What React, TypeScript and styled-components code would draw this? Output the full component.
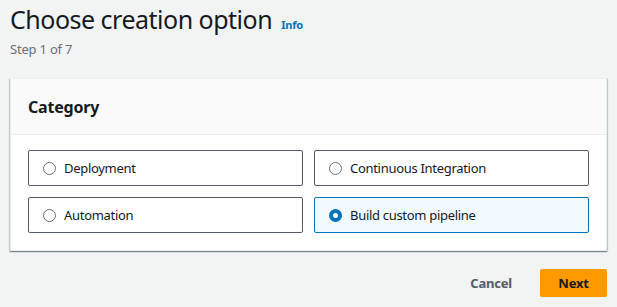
import React from "react";
import styled, { createGlobalStyle } from "styled-components";

const Global = createGlobalStyle`
  html, body { margin: 0; padding: 0; background: #f2f3f3; }
  body { font-family: "Noto Sans", "Open Sans", sans-serif; color: #16191f; }
  * { box-sizing: border-box; }
`;

const Page = styled.div`
  width: 617px;
  height: 307px;
  padding: 0 10px;
  display: flex;
  flex-direction: column;
`;

const Header = styled.div`
  padding-top: 2px;
  display: flex;
  flex-direction: column;
`;

const TitleRow = styled.div`
  display: flex;
  align-items: baseline;
  gap: 9px;
`;

const Title = styled.h1`
  margin: 0;
  font-size: 25px;
  letter-spacing: -0.5px;
  line-height: 34px;
  font-weight: 400;
  color: #16191f;
`;

const InfoLink = styled.a`
  font-size: 11px;
  font-weight: 700;
  letter-spacing: -0.2px;
  color: #0073bb;
  text-decoration: none;
`;

const Step = styled.div`
  margin-top: 3px;
  font-size: 13px;
  letter-spacing: -0.2px;
  line-height: 20px;
  color: #687078;
`;

const Card = styled.section`
  margin-top: 19px;
  background: #fff;
  border: 1px solid #eaeded;
  box-shadow: 0 1px 1px 0 rgba(0, 28, 36, 0.3), 1px 1px 1px 0 rgba(0, 28, 36, 0.15), -1px 1px 1px 0 rgba(0, 28, 36, 0.15);
`;

const CardHeader = styled.div`
  height: 56px;
  padding: 0 17px;
  display: flex;
  align-items: center;
  background: #fafafa;
  border-bottom: 1px solid #eaeded;
`;

const CardTitle = styled.h2`
  margin: 0;
  font-size: 16px;
  font-weight: 700;
  letter-spacing: -0.2px;
  line-height: 22px;
`;

const CardBody = styled.div`
  padding: 15px 17px 17px;
  display: grid;
  grid-template-columns: 1fr 1fr;
  gap: 11px;
`;

const Option = styled.label<{ $selected?: boolean }>`
  height: 36px;
  padding: 0 14px;
  display: flex;
  align-items: center;
  gap: 8px;
  border: 1px solid ${(p) => (p.$selected ? "#0073bb" : "#545b64")};
  background: ${(p) => (p.$selected ? "#f1faff" : "#fff")};
  border-radius: 2px;
  font-size: 13px;
  letter-spacing: -0.3px;
  color: #16191f;
  cursor: pointer;
`;

const Radio = styled.span<{ $checked?: boolean }>`
  width: 13px;
  height: 13px;
  border-radius: 50%;
  flex: none;
  background: #fff;
  border: ${(p) => (p.$checked ? "4px solid #0073bb" : "1.5px solid #687078")};
`;

const Footer = styled.div`
  margin-top: 18px;
  display: flex;
  justify-content: flex-end;
  align-items: center;
  gap: 8px;
`;

const LinkButton = styled.button`
  height: 28px;
  padding: 0 20px;
  background: none;
  border: none;
  font-family: inherit;
  font-size: 13px;
  font-weight: 700;
  letter-spacing: -0.2px;
  color: #545b64;
`;

const PrimaryButton = styled.button`
  height: 28px;
  width: 67px;
  background: #ff9900;
  border: none;
  border-radius: 2px;
  font-family: inherit;
  font-size: 13px;
  font-weight: 700;
  letter-spacing: -0.2px;
  color: #16191f;
`;

const options = [
  { label: "Deployment", selected: false },
  { label: "Continuous Integration", selected: false },
  { label: "Automation", selected: false },
  { label: "Build custom pipeline", selected: true },
];

export default function App() {
  return (
    <Page>
      <Global />
      <Header>
        <TitleRow>
          <Title>Choose creation option</Title>
          <InfoLink href="#">Info</InfoLink>
        </TitleRow>
        <Step>Step 1 of 7</Step>
      </Header>
      <Card>
        <CardHeader>
          <CardTitle>Category</CardTitle>
        </CardHeader>
        <CardBody>
          {options.map((o) => (
            <Option key={o.label} $selected={o.selected}>
              <Radio $checked={o.selected} />
              {o.label}
            </Option>
          ))}
        </CardBody>
      </Card>
      <Footer>
        <LinkButton>Cancel</LinkButton>
        <PrimaryButton>Next</PrimaryButton>
      </Footer>
    </Page>
  );
}
